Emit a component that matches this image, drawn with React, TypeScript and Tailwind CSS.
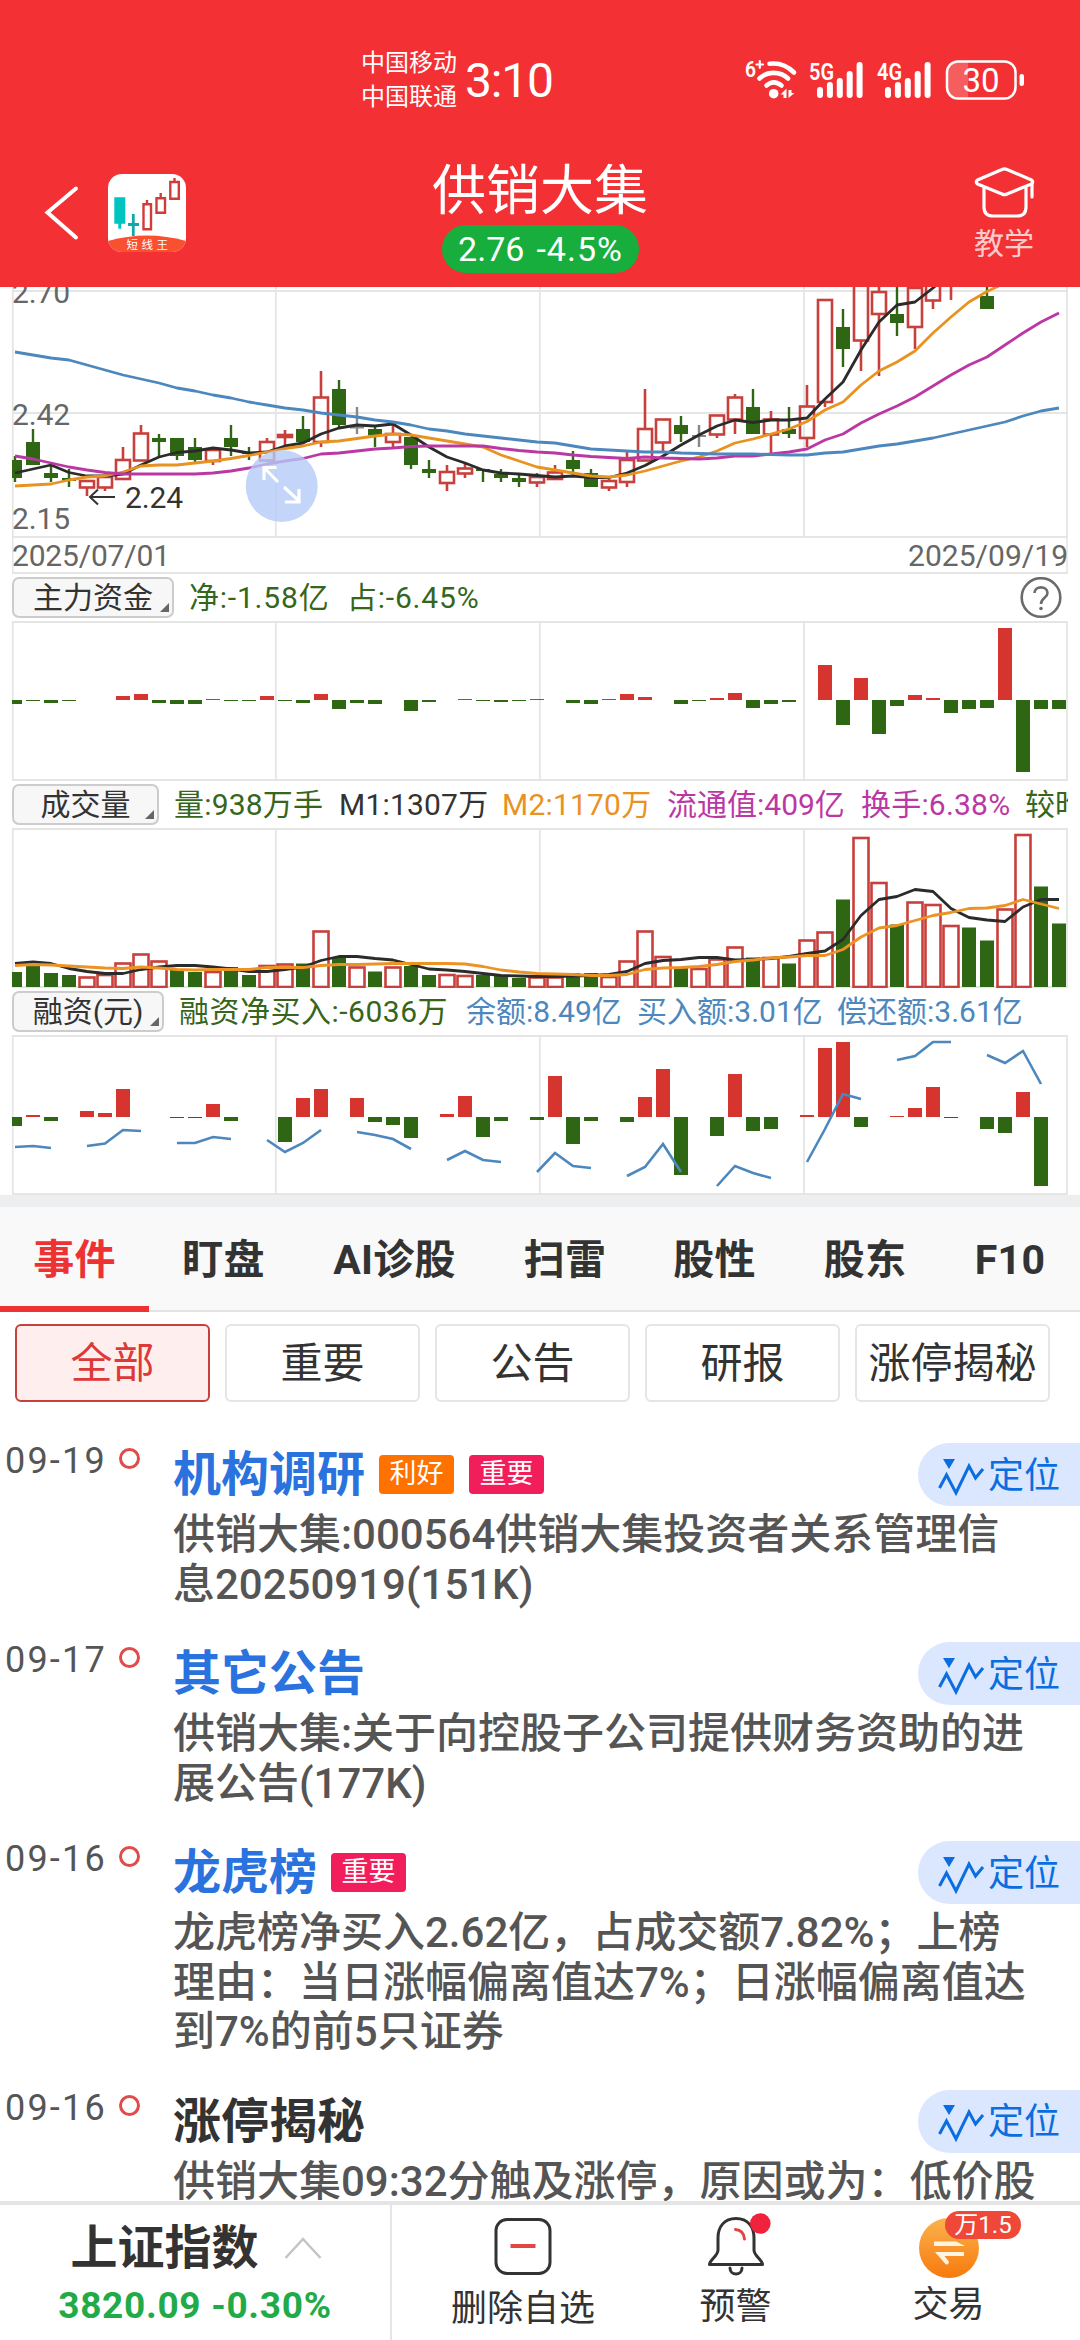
import type { ReactNode } from 'react';
import clsx from 'clsx';

const RED = '#c8403c';
const FILL_RED = '#d6342f';
const GREEN = '#2f6614';
const GRID = '#e5e5e5';

// x centre of the n-th trading day
const dayX = (i: number) => 15 + i * 18;

const points = (values: number[], toY: (v: number) => number, start = 0) =>
  values.map((v, i) => `${dayX(start + i)},${toY(v)}`).join(' ');

type Kind = 'r' | 'g' | 'x';

// kind, high, body top, body bottom, low
const candles: [Kind, number, number, number, number][] = [
  ['g', 176, 180, 198, 202], ['g', 149, 162, 185, 185], ['g', 185, 193, 198, 202], ['g', 189, 198, 201, 207],
  ['r', 201, 201, 207.5, 216], ['r', 197, 197, 207.5, 211], ['r', 167, 180, 199, 199], ['r', 145, 153.5, 180.5, 180.5],
  ['g', 154, 158, 162, 176], ['g', 158, 158, 176, 180], ['g', 158, 167, 180, 184], ['r', 170, 170, 181, 185],
  ['g', 145, 158, 167, 176], ['g', 167, 172, 174, 180], ['r', 158, 162, 180.5, 180.5], ['r', 150, 155, 157, 170],
  ['g', 136, 149, 162, 162], ['r', 91, 117.5, 162, 167], ['g', 100, 109, 145, 149], ['x', 127, 146.5, 148.5, 154],
  ['g', 145, 149, 155.5, 167], ['r', 145, 154, 162, 167], ['g', 157, 157, 185, 189], ['g', 180, 189, 193, 198],
  ['r', 185, 192, 203, 211], ['r', 184, 188.5, 193.5, 198], ['g', 189, 189, 191, 202], ['g', 189, 194, 198, 202],
  ['g', 194, 198, 202, 207], ['r', 193, 197, 202.5, 207], ['r', 185, 192.5, 199, 199], ['g', 171, 180, 189, 197],
  ['g', 189, 193, 207, 207], ['r', 198, 201, 207.5, 211], ['r', 172, 180, 202, 207], ['r', 109, 149, 180.5, 180.5],
  ['r', 139.5, 139.5, 162.5, 171], ['g', 136, 145, 154, 162], ['x', 145, 155, 157, 167], ['r', 135.5, 135.5, 154.5, 158],
  ['r', 114, 117.5, 139.5, 154], ['g', 109, 127, 154, 154], ['r', 131, 139.5, 154.5, 173], ['g', 127, 149, 154, 158],
  ['r', 105, 126.5, 158, 167], ['r', 20, 20, 122, 127], ['g', 29, 47, 69, 87], ['r', -20, -20, 60.5, 91],
  ['r', 0, 12, 34, 96], ['g', 0, 34, 43, 56], ['r', 8, 8, 47, 69], ['r', -20, -20, 20.5, 29],
  ['r', -20, -20, -5, 20], ['r', -30, -30, -20, -20], ['g', 0, 16, 29, 29],
];

const ma5 = [193, 189, 185, 192.5, 196, 196, 194, 185, 177, 172.5, 171, 168, 170, 173, 172, 166, 163, 154, 148, 145, 146, 144, 155, 167, 177, 183, 190, 193, 194, 195.5, 197, 196, 197.5, 197.5, 193, 185.5, 176, 165, 155, 146, 140, 142.5, 140, 140, 138, 119, 102, 70, 42, 25, 22, 8, -8];
const ma10 = [206, 205, 204, 200, 197, 196, 192, 186, 185, 185, 183, 181, 178.5, 175.5, 172, 168.5, 166, 162, 161, 158.5, 156, 154, 155, 158, 161, 164, 167, 175, 181, 187, 190, 193, 196, 197, 195, 191, 186, 181, 177, 171, 163, 159, 154, 149, 141.5, 130, 122, 105, 91, 82, 71, 53, 37, 22, 11.5, 3];
const ma20 = [176, 179, 183, 187, 190, 192.5, 194, 194, 194, 194, 194, 193, 191, 188, 184, 181, 178.5, 174, 173, 171, 169, 168, 166.5, 166, 166, 166, 166, 168.5, 170.5, 172, 173, 175, 176.5, 177.5, 178.5, 177, 178, 178.5, 179, 178, 176, 176, 174, 172, 169, 160, 154, 143, 134, 126, 117, 106, 95, 85, 77, 65, 53, 42, 33];
const ma60 = [72, 75, 78, 80, 85, 90, 95, 99, 103, 108, 111, 115, 118, 122, 125, 128, 130, 133, 135, 137, 140, 142, 145, 149, 151, 154, 156, 158, 160, 162, 163, 166, 169, 170, 171, 172, 172, 173, 173.5, 174, 174, 174, 174.5, 175, 175, 173, 172, 169, 166, 164, 161, 158, 154, 150, 146, 142, 136, 131, 128];

const funds = [-4, -1, -3, -1, 0, 0, 4, 6, -3, -4, -4, 1, -1, -1, 4, -1, -3, 6, -9, -3, -4, 0, -11, -2, 0, 1, -1, -2, -1, 1, 0, -3, -4, 1, 6, 3, 0, -4, -1, 2, 7, -8, -4, -2, 0, 35, -25, 22, -34, -6, 5, 2, -13, -9, -8, 72, -72, -9, -9];

const volumeKinds = 'ggggrrrrrggrggrrgrgrgrggrrgggrrggrrrrgrrrgrgrrgrrgrrrggrrgg';
const volumes = [15, 21, 14, 12, 9.5, 12, 23.5, 32.5, 25.5, 17, 15, 15, 20, 12, 21, 22.5, 23.5, 55.5, 30, 19.5, 15.5, 19.5, 21, 12, 12, 11, 12, 12, 9, 9.5, 9.5, 14, 14, 10, 25.5, 55.5, 30, 20, 18, 27.5, 39.5, 29.5, 29, 23.5, 46.5, 54.5, 87.5, 149, 104, 62.5, 84.5, 82, 61, 59.5, 46.5, 77.5, 152, 100.5, 63.5];
const volM1 = [23.5, 25, 23.5, 18.5, 15.5, 13.5, 13.5, 17.5, 20, 21.5, 21.5, 20, 18, 15.5, 15.5, 17.5, 20, 26.5, 30.5, 30.5, 28.5, 27, 22.5, 18, 17, 15.5, 13.5, 11.5, 11, 10.5, 10.5, 11, 11.5, 12.5, 15.5, 23.5, 26.5, 27.5, 29.5, 29.5, 27, 27.5, 28.5, 30.5, 33.5, 36, 47.5, 71.5, 87.5, 90.5, 97.5, 95.5, 78.5, 69.5, 67, 65.5, 80, 87.5, 87.5];
const volM2 = [21.5, 22.5, 22, 21, 20, 19, 18.5, 20, 19, 17.5, 17, 17.5, 17.5, 17.5, 19.5, 19.5, 19.5, 21.5, 22.5, 22.5, 23, 23.5, 23.5, 23.5, 23.5, 23, 20.5, 17, 15, 13.5, 13, 12.5, 11.5, 11.5, 12.5, 17.5, 19, 19.5, 20.5, 22.5, 25.5, 27, 29, 30, 31.5, 31.5, 37.5, 50, 59, 61.5, 66.5, 71.5, 74.5, 78.5, 79, 81.5, 87.5, 83, 78.5];

// Margin data comes in runs of four days with gaps between them
const margin = [-9, 2, -4, 0, 6, 4, 28, 0, 0, -1, -1, 13, -4, 0, 0, -25, 19, 28, 0, 19, -5, -8, -21, 0, 3, 21, -20, -4, 0, -3, 41, -27, -4, 0, -5, 20, 48, -58, 0, -19, 43, -14, -12, 0, 2, 69, 75, -10, 0, 1, 9, 30, -1, 0, -12, -16, 25, -69];
const marginLines: [number, number[]][] = [
  [0, [167, 166, 168]],
  [4, [166, 163.5, 150, 151]],
  [9, [163, 163, 157, 159]],
  [14, [160, 172, 163, 150]],
  [19, [152, 155, 159, 169]],
  [24, [180, 171, 180, 182]],
  [29, [192, 173, 186, 188]],
  [34, [196, 187, 164, 192]],
  [39, [206, 186, 193, 198]],
  [44, [182, 149, 114, 119]],
  [49, [80, 76, 62, 62]],
  [54, [75, 83, 71, 104]],
];

const tabs = [
  { name: '事件', width: 'w-[149px]', active: true },
  { name: '盯盘', width: 'w-[149px]' },
  { name: 'AI诊股', width: 'w-[193px]' },
  { name: '扫雷', width: 'w-[148px]' },
  { name: '股性', width: 'w-[151px]' },
  { name: '股东', width: 'w-[150px]' },
  { name: 'F10', width: 'w-[140px]' },
];

const filters = ['全部', '重要', '公告', '研报', '涨停揭秘'];

const events = [
  {
    date: '09-19',
    title: '机构调研',
    tags: ['利好', '重要'],
    lines: ['供销大集:000564供销大集投资者关系管理信', '息20250919(151K)'],
  },
  {
    date: '09-17',
    title: '其它公告',
    tags: [],
    lines: ['供销大集:关于向控股子公司提供财务资助的进', '展公告(177K)'],
  },
  {
    date: '09-16',
    title: '龙虎榜',
    tags: ['重要'],
    lines: ['龙虎榜净买入2.62亿，占成交额7.82%；上榜', '理由：当日涨幅偏离值达7%；日涨幅偏离值达', '到7%的前5只证券'],
  },
  {
    date: '09-16',
    title: '涨停揭秘',
    dark: true,
    tags: [],
    lines: ['供销大集09:32分触及涨停，原因或为：低价股'],
  },
];

const SignalBars = ({ label }: { label: string }) => (
  <svg width="56" height="42" viewBox="0 0 56 42">
    <text x="0" y="22" fontSize="23" fontWeight="600" fill="white" textLength="25" lengthAdjust="spacingAndGlyphs">
      {label}
    </text>
    {[29, 24, 20, 13, 4].map((top, i) => (
      <rect key={top} x={8 + i * 9.9} y={top} width="6" height={40 - top} rx="3" fill="white" />
    ))}
  </svg>
);

const StatusBar = () => (
  <div className="flex h-[158px] items-center text-white">
    <div className="ml-[361px] w-[104px] pt-[2px] text-[24px] leading-[34px]">
      <p>中国移动</p>
      <p>中国联通</p>
    </div>
    <p className="w-[280px] pt-[3px] text-[48px] leading-none tracking-[-1.2px]">3:10</p>
    <svg width="54" height="42" viewBox="743 57 54 42" fill="none" stroke="white" strokeWidth="4.6" strokeLinecap="round">
      <text x="743" y="76" fontSize="22" fontWeight="600" fill="white" stroke="none" textLength="11" lengthAdjust="spacingAndGlyphs">6</text>
      <path d="M754.500 63.500h6.500M757.800 60.200v6.600" strokeWidth="2.2" />
      <path d="M767.500 62.800C777 61.500 785.500 65 792 71.500" />
      <path d="M757.500 77.500C765.500 70 778 70 786 77.500" />
      <path d="M764.500 84.500C769 80.500 774.500 80.500 779.500 84.500" />
      <circle cx="771.700" cy="92.700" r="4.800" fill="white" stroke="none" />
      <path d="M778.500 93.500L784.500 87.500V97H781.500V93.500ZM786.500 89V97L792.500 92H789.500V89Z" fill="white" stroke="none" />
    </svg>
    <div className="ml-[10px] flex gap-3">
      <SignalBars label="5G" />
      <SignalBars label="4G" />
    </div>
    <svg className="ml-[11px]" width="82" height="42" viewBox="941 57 82 42">
      <path d="M954 60.500h11v37h-11a10 10 0 0 1-10-10v-17a10 10 0 0 1 10-10z" fill="white" fillOpacity="0.22" />
      <rect x="944" y="60.500" width="68.500" height="37" rx="11" fill="none" stroke="white" strokeWidth="2.500" />
      <rect x="1016.500" y="73" width="4.500" height="12" rx="2.200" fill="white" />
      <text x="978" y="90.500" fontSize="33" fill="white" textAnchor="middle">30</text>
    </svg>
  </div>
);

const AppIcon = () => (
  <svg width="78" height="78" viewBox="108 174 78 78">
    <defs>
      <clipPath id="app-icon">
        <rect x="108" y="174" width="78" height="78" rx="14" />
      </clipPath>
    </defs>
    <g clipPath="url(#app-icon)">
      <rect x="108" y="174" width="78" height="78" fill="white" />
      <path d="M108 241Q147 230 186 241V252H108Z" fill="#f9502f" />
      <path d="M114.300 197.300h11v26.500h-4v5h-3v-5h-4z" fill="#00c4c0" />
      <path d="M133.300 214v22M128 224.500h11" stroke="#12a8a8" strokeWidth="2.800" />
      <g fill="none" stroke="#d23c38" strokeWidth="2.400">
        <path d="M143.500 204.300h7.500v25h-7.500zM147 204v-4" />
        <path d="M156.500 198.300h8.500v14.500h-8.500zM160.700 198v-5" />
        <path d="M170.300 182h8.500v16.800h-8.500zM174.500 182v-4" />
      </g>
      <text x="126.500" y="249" fontSize="11.500" fill="white" letterSpacing="3.500">短线王</text>
    </g>
  </svg>
);

const Header = () => (
  <header className="h-[287px] bg-[#f33033]">
    <StatusBar />
    <div className="grid grid-cols-[1fr_auto_1fr] text-white">
      <div className="flex pt-4 pl-[43px]">
        <svg width="65" height="78" viewBox="43 174 65 78" fill="none" stroke="white" strokeWidth="4" strokeLinecap="round">
          <path d="M76 188.500L47.500 212.500L76 237.500" />
        </svg>
        <AppIcon />
      </div>
      <div className="flex flex-col items-center">
        <h1 className="h-[67px] text-[54px] leading-[67px]">供销大集</h1>
        <p className="flex h-12 w-[197px] items-center justify-center gap-[12px] rounded-full bg-[#17ae3e] pl-[1px] text-[34px] leading-none">
          <span>2.76</span>
          <span className="tracking-[1px]">-4.5%</span>
        </p>
      </div>
      <div className="flex flex-col items-end pt-[7px] pr-[44px]">
        <svg width="64" height="56" viewBox="971 165 64 56" fill="none" stroke="white" strokeWidth="3.200" strokeLinejoin="round" strokeLinecap="round">
          <path d="M1001 169.500Q1003.500 168.300 1006 169.500L1030.500 180Q1033 182 1030.500 184L1006 194Q1003.500 195.300 1001 194L976.500 184Q974 182 976.500 180Z" />
          <path d="M983 188V207Q983 216 992 216H1016Q1025 216 1025 207V188" />
          <path d="M1031 183V197" />
        </svg>
        <p className="mr-[2px] text-[30px] leading-[46px] opacity-75">教学</p>
      </div>
    </div>
  </header>
);

const PaneGrid = ({ height, top = 0 }: { height: number; top?: number }) => (
  <g stroke={GRID} strokeWidth="1.800">
    {[12.8, 275.8, 539.8, 804, 1067].map((x) => (
      <path key={x} d={`M${x} ${top}V${height}`} />
    ))}
  </g>
);

const Candle = ({ i, candle }: { i: number; candle: [Kind, number, number, number, number] }) => {
  const [kind, high, top, bottom, low] = candle;
  const x = dayX(i);
  if (kind === 'r') {
    return (
      <g fill="none" stroke={RED} strokeWidth="2.600">
        <path d={`M${x} ${high}V${top}M${x} ${bottom}V${low}`} />
        <rect x={x - 7} y={top} width="14" height={bottom - top} />
      </g>
    );
  }
  const color = kind === 'g' ? GREEN : '#888888';
  return (
    <g fill={color}>
      <rect x={x - 1.2} y={high} width="2.400" height={low - high} />
      <rect x={x - 7} y={top} width="14" height={bottom - top} />
    </g>
  );
};

const KLine = () => (
  <svg className="block" width="1080" height="287" viewBox="0 7 1080 287">
    <defs>
      <clipPath id="pane">
        <rect x="12" y="0" width="1056" height="300" />
      </clipPath>
    </defs>
    <PaneGrid height={257} />
    <path d="M12 11H1068M12 133H1068M12 257H1068M12 293H1068" stroke={GRID} strokeWidth="2" />
    <path d="M12.800 257V294M1067 257V294" stroke={GRID} strokeWidth="1.500" />
    <g fontSize="30" fill="#666666">
      <text x="12" y="23" textLength="58">2.70</text>
      <text x="12" y="145" textLength="58">2.42</text>
      <text x="12" y="249" textLength="58">2.15</text>
      <text x="12" y="286" textLength="158">2025/07/01</text>
      <text x="908" y="286" textLength="160">2025/09/19</text>
    </g>
    <g clipPath="url(#pane)">
      {candles.map((candle, i) => (
        <Candle key={i} i={i} candle={candle} />
      ))}
      <g fill="none" strokeWidth="2.800" strokeLinejoin="round">
        <polyline points={points(ma5, (v) => v)} stroke="#2b2b2b" />
        <polyline points={points(ma10, (v) => v)} stroke="#e8921f" />
        <polyline points={points(ma20, (v) => v)} stroke="#bb38a4" />
        <polyline points={points(ma60, (v) => v)} stroke="#4c87bd" />
      </g>
    </g>
    <path d="M115 217H90M98 209.500L90 217L98 224.500" stroke="#333333" strokeWidth="2" fill="none" />
    <text x="125" y="228" fontSize="30" fill="#333333" textLength="58">2.24</text>
    <circle cx="281.700" cy="206" r="36" fill="#b4cbf7" fillOpacity="0.8" />
    <path
      d="M278 202L264.500 188M276.500 187.500H264V200M284 207L299 221M285 222H299V209"
      stroke="white"
      strokeWidth="3.200"
      fill="none"
    />
  </svg>
);

const Bars = ({ values, zero }: { values: number[]; zero: number }) => (
  <g clipPath="url(#pane)">
    {values.map((v, i) =>
      v === 0 ? null : (
        <rect
          key={i}
          x={dayX(i) - 7}
          y={v > 0 ? zero - v : zero}
          width="14"
          height={Math.abs(v)}
          fill={v > 0 ? FILL_RED : GREEN}
        />
      ),
    )}
  </g>
);

const IndicatorRow = ({ name, width, children }: { name: string; width: string; children: ReactNode }) => (
  <div className="flex h-[47px] items-start pt-[3px] pl-3 text-[30px] leading-[41px] whitespace-nowrap">
    <button
      className={clsx(
        'relative h-[41px] shrink-0 rounded-[7px] border-2 border-[#cccccc] bg-[#f7f7f7] leading-[36px] text-[#333333]',
        width,
      )}
    >
      {name}
      <svg className="absolute right-[3px] bottom-1" width="9" height="9" viewBox="0 0 9 9">
        <path d="M9 0V9H0Z" fill="#666666" />
      </svg>
    </button>
    {children}
  </div>
);

const FundsPane = () => (
  <section>
    <IndicatorRow name="主力资金" width="w-[162px]">
      <p className="ml-[15px] w-[158px] tracking-[0.8px] text-[#35661c]">净:-1.58亿</p>
      <p className="tracking-[0.8px] text-[#35661c]">占:-6.45%</p>
      <svg className="mr-[18px] ml-auto" width="42" height="42" viewBox="0 0 42 42" fill="none" stroke="#6b6b6b" strokeWidth="2.600">
        <circle cx="21" cy="20.500" r="19.300" />
        <path d="M14.500 16C14.500 8.500 27.500 8.500 27.500 16C27.500 21 21 20.500 21 27" />
        <circle cx="21" cy="31.500" r="1.800" fill="#6b6b6b" stroke="none" />
      </svg>
    </IndicatorRow>
    <svg className="block" width="1080" height="160" viewBox="0 0 1080 160">
      <PaneGrid top={0} height={159} />
      <path d="M12 1H1068M12 159H1068" stroke={GRID} strokeWidth="2" />
      <Bars values={funds} zero={79} />
    </svg>
  </section>
);

const VolumePane = () => (
  <section>
    <IndicatorRow name="成交量" width="w-[147px]">
      <div className="ml-[15px] flex w-[894px] overflow-hidden">
        <p className="w-[165px] shrink-0 tracking-[0.2px] text-[#35661c]">量:938万手</p>
        <p className="w-[163px] shrink-0 tracking-[0.2px] text-[#333333]">M1:1307万</p>
        <p className="w-[165px] shrink-0 tracking-[0.2px] text-[#e8921f]">M2:1170万</p>
        <p className="w-[194px] shrink-0 text-[#bb38a4]">流通值:409亿</p>
        <p className="w-[164px] shrink-0 tracking-[0.2px] text-[#bb38a4]">换手:6.38%</p>
        <p className="shrink-0 text-[#35661c]">较昨</p>
      </div>
    </IndicatorRow>
    <svg className="block" width="1080" height="160" viewBox="0 0 1080 160">
      <PaneGrid top={0} height={159} />
      <path d="M12 1H1068M12 159H1068" stroke={GRID} strokeWidth="2" />
      <g clipPath="url(#pane)">
        {volumes.map((v, i) =>
          volumeKinds[i] === 'g' ? (
            <rect key={i} x={dayX(i) - 7} y={159 - v} width="14" height={v} fill={GREEN} />
          ) : (
            <rect
              key={i}
              x={dayX(i) - 7.5}
              y={159 - v}
              width="15"
              height={v}
              fill="white"
              stroke={RED}
              strokeWidth="2.600"
            />
          ),
        )}
        <g fill="none" strokeWidth="2.800" strokeLinejoin="round">
          <polyline points={points(volM1, (v) => 159 - v)} stroke="#2b2b2b" />
          <polyline points={points(volM2, (v) => 159 - v)} stroke="#ec9323" />
        </g>
      </g>
    </svg>
  </section>
);

const MarginPane = () => (
  <section>
    <IndicatorRow name="融资(元)" width="w-[152px]">
      <p className="ml-[15px] w-[287px] tracking-[0.5px] text-[#35661c]">融资净买入:-6036万</p>
      <div className="flex text-[#4c87bd]">
        <p className="w-[171px]">余额:8.49亿</p>
        <p className="w-[200px]">买入额:3.01亿</p>
        <p>偿还额:3.61亿</p>
      </div>
    </IndicatorRow>
    <svg className="block" width="1080" height="160" viewBox="0 55 1080 160">
      <PaneGrid top={55} height={214} />
      <path d="M12 56H1068M12 214H1068" stroke={GRID} strokeWidth="2" />
      <Bars values={margin} zero={137} />
      {marginLines.map(([start, values]) => (
        <polyline
          key={start}
          points={points(values, (v) => v, start)}
          fill="none"
          stroke="#4c87bd"
          strokeWidth="2.600"
        />
      ))}
    </svg>
  </section>
);

const Tabs = () => (
  <nav className="flex h-[105px] border-b-2 border-[#e3e3e3] bg-[#f9f9f9] text-[41px] font-bold text-[#333333]">
    {tabs.map((tab) => (
      <button
        key={tab.name}
        className={clsx(
          'flex h-[105px] shrink-0 items-center justify-center border-b-[6px] pt-[9px] tracking-[0.3px]',
          tab.width,
          tab.active ? 'border-[#ee3234] text-[#ee3234]' : 'border-transparent',
        )}
      >
        {tab.name}
      </button>
    ))}
  </nav>
);

const Filters = () => (
  <div className="flex gap-[15px] px-[15px] pt-3 text-[42px] text-[#333333]">
    {filters.map((name, i) => (
      <button
        key={name}
        className={clsx(
          'flex h-[78px] w-[195px] shrink-0 items-center justify-center rounded-md border-2 whitespace-nowrap',
          i === 0 ? 'border-[#c8403c] bg-[#ffeeee] text-[#dc3a38]' : 'border-[#e5e5e5] bg-white',
        )}
      >
        {name}
      </button>
    ))}
  </div>
);

const LocateButton = () => (
  <button className="flex h-[63px] w-[162px] shrink-0 items-center rounded-l-full bg-[#dbe6ff] pt-[2px] pl-5 text-[36px] text-[#0a6ee0]">
    <svg className="mt-[2px] mr-[3px]" width="47" height="40" viewBox="0 0 47 40">
      <path d="M5 2H17L11 12Z" fill="#0a6ee0" />
      <path d="M1.500 31L8.500 18L18 36L31 9L37.500 21L45 12" fill="none" stroke="#0a6ee0" strokeWidth="3" />
    </svg>
    定位
  </button>
);

const Events = () => (
  <main className="h-[799px] overflow-hidden pt-[41px]">
    {events.map((event, index) => (
      <article key={index} className="mb-[33px] flex items-start">
        <p className="w-[119px] shrink-0 pl-[5px] text-[36px] leading-9 tracking-[2.2px] text-[#555555]">{event.date}</p>
        <span className="mt-[5px] mr-[33px] h-[21px] w-[21px] shrink-0 rounded-full border-3 border-[#e04b4b]" />
        <div className="flex-1">
          <div className="flex h-[67px] items-start">
            <h2
              className={clsx(
                'mr-[14px] text-[48px] leading-[64px] font-bold',
                event.dark ? 'text-[#333333]' : 'text-[#2a72de]',
              )}
            >
              {event.title}
            </h2>
            {event.tags.map((tag) => (
              <span
                key={tag}
                className={clsx(
                  'mt-3 mr-[15px] flex h-[39px] w-[75px] items-center justify-center rounded-[4px] text-[27px] leading-none text-white',
                  tag === '利好' ? 'bg-[#ff7200]' : 'bg-[#f21d5b]',
                )}
              >
                {tag}
              </span>
            ))}
            <div className="ml-auto">
              <LocateButton />
            </div>
          </div>
          {event.lines.map((line) => (
            <p key={line} className="text-[42px] leading-[49.5px] font-medium whitespace-nowrap text-[#555555]">
              {line}
            </p>
          ))}
        </div>
      </article>
    ))}
  </main>
);

const BottomBar = () => (
  <footer className="flex h-[139px] border-t-4 border-[#e5e5e5] bg-white text-[#333333]">
    <div className="flex w-[392px] flex-col items-center border-r-2 border-[#e5e5e5] pt-[14px]">
      <div className="flex items-center gap-[25px] pl-[2px]">
        <p className="text-[47px] leading-[58px] font-bold">上证指数</p>
        <svg width="38" height="24" viewBox="0 0 38 24" fill="none" stroke="#c4c4c4" strokeWidth="2.500">
          <path d="M1.500 22L19 3L36.500 22" />
        </svg>
      </div>
      <p className="mt-[6px] text-[37px] leading-[46px] font-bold tracking-[0.7px] text-[#21ab48]">3820.09 -0.30%</p>
    </div>
    <div className="flex w-[262px] flex-col items-center pt-3">
      <svg width="60" height="60" viewBox="0 0 60 60" fill="none">
        <rect x="3" y="2.500" width="54" height="54" rx="11" stroke="#333333" strokeWidth="3" />
        <path d="M17.500 29H42.500" stroke="#e34545" strokeWidth="4" />
      </svg>
      <p className="mt-[9px] text-[36px] leading-[46px]">删除自选</p>
    </div>
    <div className="flex w-[163px] flex-col items-center pt-2">
      <svg width="70" height="66" viewBox="700 2213 70 66" fill="none" strokeLinejoin="round" strokeLinecap="round">
        <path
          d="M735 2218.500C723 2218.500 717 2227 717 2238V2250C717 2256 708.500 2260 708.500 2264.500H761.500C761.500 2260 753 2256 753 2250V2238C753 2227 747 2218.500 735 2218.500Z"
          stroke="#333333"
          strokeWidth="3"
        />
        <path d="M729 2268C729 2276 741 2276 741 2268" stroke="#333333" strokeWidth="3" />
        <path d="M734.500 2229.500C740 2230 743 2233.500 743.500 2239" stroke="#e34545" strokeWidth="3" />
        <circle cx="759.300" cy="2223.500" r="10.300" fill="#f0223c" />
      </svg>
      <p className="mt-[5px] text-[36px] leading-[46px]">预警</p>
    </div>
    <div className="relative flex w-[263px] flex-col items-center pt-[13px]">
      <svg width="60" height="60" viewBox="0 0 60 60">
        <defs>
          <linearGradient id="trade" x1="0" y1="0" x2="0" y2="1">
            <stop offset="0" stopColor="#fbb24e" />
            <stop offset="1" stopColor="#f77a0c" />
          </linearGradient>
        </defs>
        <circle cx="30" cy="30" r="30" fill="url(#trade)" />
        <path d="M15 23.500H37L46 28H15ZM45 34V38H25.500L29.500 43A2 2 0 0 1 26 45.500L16 34Z" fill="#fff3e2" />
      </svg>
      <span className="absolute top-[6px] left-[128px] flex h-7 w-[76px] items-center justify-center rounded-full bg-[#f04838] text-[24px] leading-none text-white">
        万1.5
      </span>
      <p className="mt-1 text-[36px] leading-[46px]">交易</p>
    </div>
  </footer>
);

export default function App() {
  return (
    <div className="h-[2340px] w-[1080px] overflow-hidden bg-white font-[Roboto,'Noto_Sans_CJK_SC',sans-serif]">
      <Header />
      <KLine />
      <FundsPane />
      <VolumePane />
      <MarginPane />
      <div className="h-3 bg-[#eceef0]" />
      <Tabs />
      <Filters />
      <Events />
      <BottomBar />
    </div>
  );
}
